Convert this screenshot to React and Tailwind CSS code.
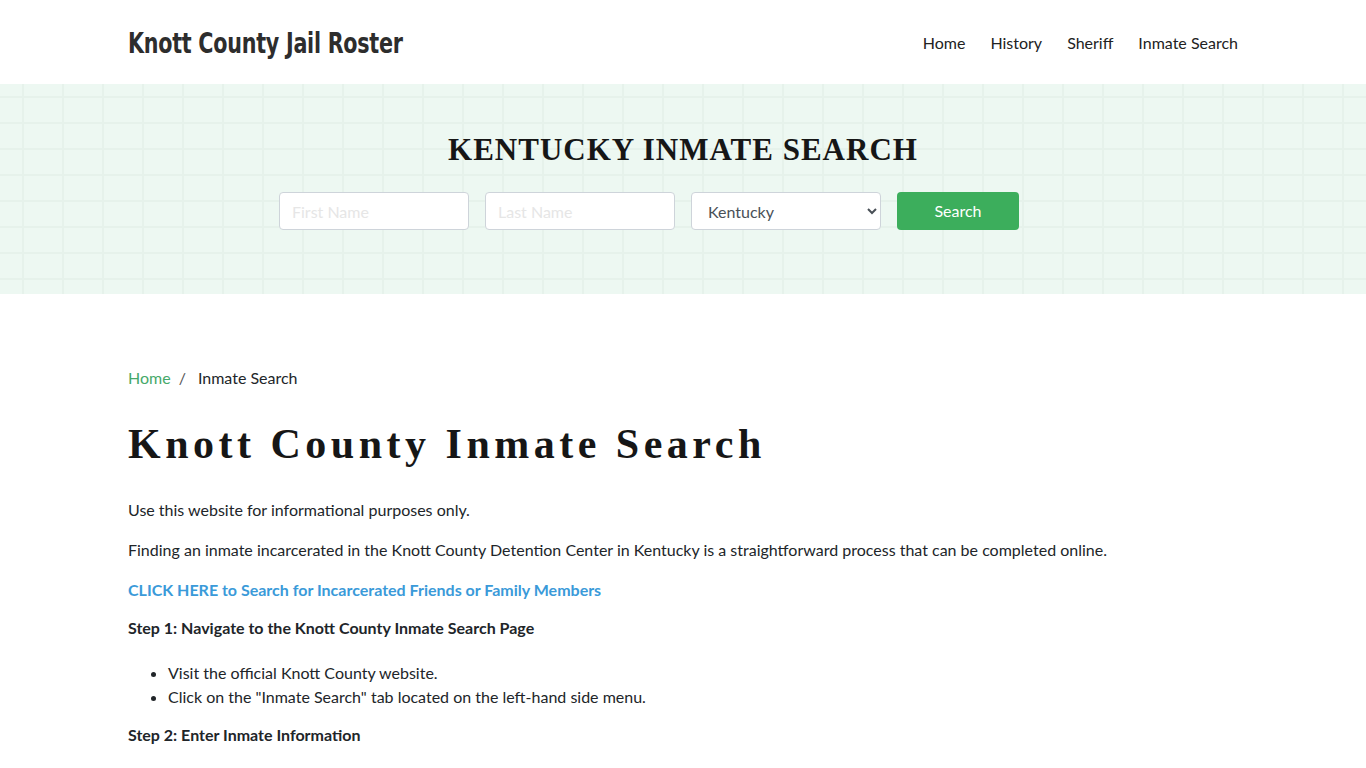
import React from 'react';

const navLinks = ['Home', 'History', 'Sheriff', 'Inmate Search'];

const serif = "font-['Liberation_Serif','Times_New_Roman',serif]";

const App = () => {
  return (
    <div className="min-h-screen bg-white font-['Lato',sans-serif] text-[16px] text-[#212529]">
      {/* Header */}
      <header className="h-[84px] bg-white">
        <div className="mx-auto flex h-full w-[1110px] items-center justify-between pt-[3px]">
          <a
            href="#"
            className="origin-left scale-x-[0.82] font-['DejaVu_Sans',sans-serif] text-[28px] font-bold tracking-[-0.3px] whitespace-nowrap text-[#2d2d2d] font-stretch-condensed"
          >
            Knott County Jail Roster
          </a>
          <nav className="-mt-[2px] flex items-center gap-[25px] text-[16px] text-[#222]">
            {navLinks.map((l) => (
              <a key={l} href="#">
                {l}
              </a>
            ))}
          </nav>
        </div>
      </header>

      {/* Search banner */}
      <section className="flex h-[210px] flex-col items-center bg-[#edf8f2] bg-[linear-gradient(to_right,#e6f2eb_2px,transparent_2px),linear-gradient(to_bottom,#e6f2eb_2px,transparent_2px)] bg-[size:40px_26px] bg-[position:22px_12px] pt-[47px]">
        <h2 className={`${serif} text-[31px] font-bold uppercase leading-[38px] tracking-[1px] text-[#161616]`}>
          Kentucky Inmate Search
        </h2>
        <form className="mt-[23px] flex gap-4 pr-[68px]">
          <input
            placeholder="First Name"
            className="h-[38px] w-[190px] rounded-[4px] border border-[#ced4da] bg-white px-3 text-[16px] placeholder:text-[#e6e6e6] outline-none"
          />
          <input
            placeholder="Last Name"
            className="h-[38px] w-[190px] rounded-[4px] border border-[#ced4da] bg-white px-3 text-[16px] placeholder:text-[#e6e6e6] outline-none"
          />
          <select
            defaultValue="Kentucky"
            className="h-[38px] w-[190px] rounded-[4px] border border-[#ced4da] bg-white pl-3 pr-2 text-[16px] text-[#495057] outline-none"
          >
            <option>Kentucky</option>
          </select>
          <button
            type="button"
            className="h-[38px] w-[122px] rounded-[4px] bg-[#3cae5c] text-[16px] text-white"
          >
            Search
          </button>
        </form>
      </section>

      {/* Article */}
      <main className="mx-auto w-[1110px] pt-[74px]">
        <div className="flex items-center leading-[20px]">
          <a href="#" className="text-[#46a96a]">
            Home
          </a>
          <span className="px-2 text-[#555]">/</span>
          <span className="pl-1">Inmate Search</span>
        </div>

        <h1 className={`${serif} mt-[31px] text-[42px] font-bold leading-[50px] tracking-[4.5px] text-[#161616]`}>
          Knott County Inmate Search
        </h1>

        <p className="mt-[29px] leading-[24px]">Use this website for informational purposes only.</p>
        <p className="mt-4 leading-[24px]">
          Finding an inmate incarcerated in the Knott County Detention Center in Kentucky is a
          straightforward process that can be completed online.
        </p>
        <p className="mt-4 leading-[24px]">
          <a href="#" className="font-bold text-[#3a9ad9]">
            CLICK HERE to Search for Incarcerated Friends or Family Members
          </a>
        </p>
        <p className="mt-[14px] font-bold leading-[24px]">
          Step 1: Navigate to the Knott County Inmate Search Page
        </p>
        <ul className="mt-[21px] list-disc pl-10 leading-[24px]">
          <li>Visit the official Knott County website.</li>
          <li>Click on the "Inmate Search" tab located on the left-hand side menu.</li>
        </ul>
        <p className="mt-[14px] font-bold leading-[24px]">Step 2: Enter Inmate Information</p>
      </main>
    </div>
  );
};

export default App;
